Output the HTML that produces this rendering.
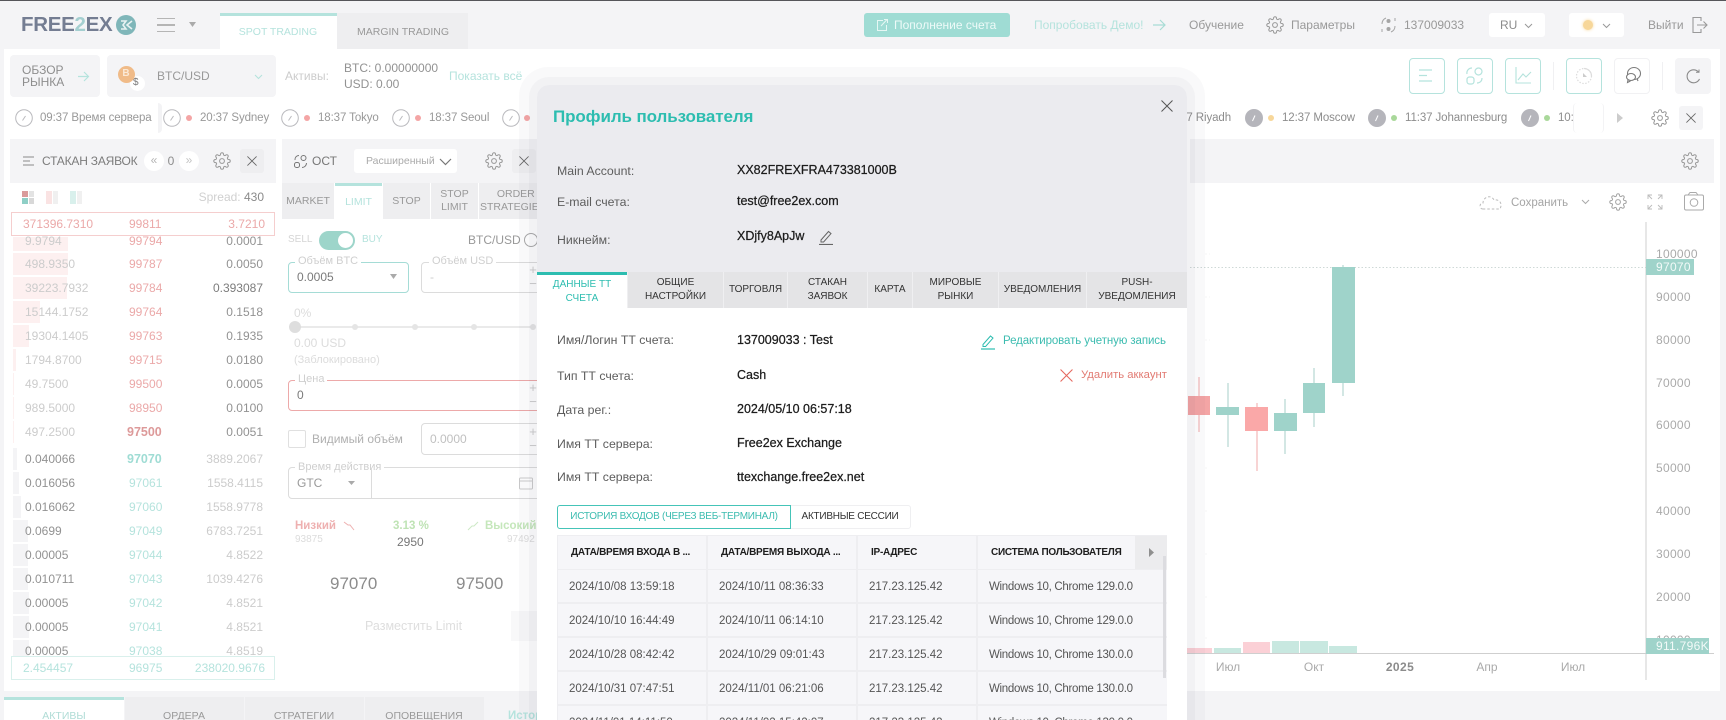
<!DOCTYPE html>
<html lang="ru"><head><meta charset="utf-8"><title>Free2ex</title>
<style>
*{box-sizing:border-box}
html,body{margin:0;padding:0;width:1726px;height:720px;overflow:hidden;background:#f4f4f6;font-family:"Liberation Sans",Arial,sans-serif}
#p{position:relative;width:1726px;height:720px;overflow:hidden;filter:blur(.3px)}
.b{position:absolute}
.t{position:absolute;white-space:nowrap;line-height:16px;transform:translateY(-50%);font-size:12px;color:#999}
.c{transform:translate(-50%,-50%);text-align:center}
.r{transform:translate(-100%,-50%)}
.o{font-size:12px}
.k{font-size:11.5px;letter-spacing:-.1px}
.gy{color:#ccc}.pk{color:#eba9a9}.d{color:#929292}.tl{color:#b5e3dd}.dk{color:#7c7c7c}
.dp{position:absolute;left:13px;height:22px;background:#fdf0f0}
.dg{position:absolute;left:13px;height:22px;background:#f4f4f6}
svg{position:absolute;overflow:visible}
.fs{position:absolute;border:1px solid #dcdcdc;border-radius:4px;background:#fff}
.lg{position:absolute;background:#fff;padding:0 3px;font-size:11px;line-height:12px;color:#cfcfcf;white-space:nowrap}
.tb{position:absolute;background:#eeeef0;font-size:10.5px;color:#999;display:flex;align-items:center;justify-content:center;text-align:center;line-height:13px}
.m{position:absolute;left:537px;top:85px;width:650px;height:660px;background:#fff;border-radius:12px 12px 0 0;box-shadow:0 0 0 8px rgba(70,70,90,.04),0 0 0 18px rgba(70,70,90,.03)}
.mh{position:absolute;left:0;top:0;width:650px;height:187px;background:#ebebef;border-radius:12px 12px 0 0}
.l{position:absolute;left:20px;transform:translateY(-50%);font-size:12.3px;line-height:16px;color:#5d5d5d;white-space:nowrap}
.v{position:absolute;left:200px;transform:translateY(-50%);font-size:12.5px;line-height:16px;color:#1c1c1c;white-space:nowrap;-webkit-text-stroke:.25px #1c1c1c}
.mt{position:absolute;top:187px;height:36px;background:#e4e4e6;font-size:10px;line-height:14px;color:#333;display:flex;align-items:center;justify-content:center;text-align:center;border-left:1px solid #efeff1}
.cell{position:absolute;height:32px;background:#f6f6f9;font-size:11.5px;line-height:34px;color:#555;padding-left:11px;white-space:nowrap;overflow:hidden}
.w{letter-spacing:-.3px}
.hd{font-weight:bold;font-size:10px;letter-spacing:-.25px;color:#1d1d1d;padding-left:13px;height:33px;line-height:33px}
</style></head><body><div id="p">
<svg width="0" height="0" style="position:absolute"><defs>
<symbol id="g" viewBox="0 0 24 24"><path fill="none" stroke="currentColor" stroke-width="1.4" d="M19.4 15a1.65 1.65 0 0 0 .33 1.82l.06.06a2 2 0 0 1 0 2.83 2 2 0 0 1-2.83 0l-.06-.06a1.65 1.65 0 0 0-1.82-.33 1.65 1.65 0 0 0-1 1.51V21a2 2 0 0 1-2 2 2 2 0 0 1-2-2v-.09A1.65 1.65 0 0 0 9 19.4a1.65 1.65 0 0 0-1.82.33l-.06.06a2 2 0 0 1-2.83 0 2 2 0 0 1 0-2.83l.06-.06a1.65 1.65 0 0 0 .33-1.82 1.65 1.65 0 0 0-1.51-1H3a2 2 0 0 1-2-2 2 2 0 0 1 2-2h.09A1.65 1.65 0 0 0 4.6 9a1.65 1.65 0 0 0-.33-1.82l-.06-.06a2 2 0 0 1 0-2.83 2 2 0 0 1 2.83 0l.06.06a1.65 1.65 0 0 0 1.82.33H9a1.65 1.65 0 0 0 1-1.51V3a2 2 0 0 1 2-2 2 2 0 0 1 2 2v.09a1.65 1.65 0 0 0 1 1.51 1.65 1.65 0 0 0 1.82-.33l.06-.06a2 2 0 0 1 2.83 0 2 2 0 0 1 0 2.83l-.06.06a1.65 1.65 0 0 0-.33 1.82V9a1.65 1.65 0 0 0 1.51 1H21a2 2 0 0 1 2 2 2 2 0 0 1-2 2h-.09a1.65 1.65 0 0 0-1.51 1z"/><circle cx="12" cy="12" r="3.2" fill="none" stroke="currentColor" stroke-width="1.4"/></symbol>
<symbol id="x" viewBox="0 0 12 12"><path d="M.5 .5L11.5 11.5M11.5 .5L.5 11.5" stroke="currentColor" stroke-width="1" fill="none"/></symbol>
<symbol id="cl" viewBox="0 0 18 18"><circle cx="9" cy="9" r="8.300" fill="none" stroke="#b9b9bd" stroke-width="1"/><path d="M7.500 11.500L10.500 7" stroke="#b9b9bd" stroke-width="1"/></symbol>
<symbol id="cd" viewBox="0 0 18 18"><circle cx="9" cy="9" r="9" fill="#b5b5bb"/><path d="M7.500 12L10 6.500" stroke="#fff" stroke-width="1" fill="none"/></symbol>
<symbol id="ed" viewBox="0 0 16 16"><path d="M3 11L10.500 2.500 13 4.600 5.600 13H3z" fill="none" stroke="currentColor" stroke-width="1"/><path d="M1 15.500H15" stroke="currentColor" stroke-width="1.200"/></symbol>
</defs></svg>

<!-- top -->
<div class="b" style="left:0;top:0;width:1726px;height:1px;background:#55555a"></div>
<div class="t" style="left:21px;top:25px;font-size:20.500px;font-weight:bold;color:#747d92;letter-spacing:-.3px">FREE<span style="color:#a4cfd0">2</span>EX</div>
<div class="b" style="left:116px;top:15px;width:20px;height:20px;border-radius:50%;background:#7fb6b9"></div>
<svg style="left:116px;top:15px" width="20" height="20"><path d="M5 6H10L7 10 10 14H5M16 6L11 10 16 14" fill="none" stroke="#e8f2f2" stroke-width="1.600"/></svg>
<div class="b" style="left:157px;top:18px;width:18px;height:14px;border-top:1.500px solid #b5b5b5;border-bottom:1.500px solid #b5b5b5"></div>
<div class="b" style="left:157px;top:24px;width:18px;height:1.500px;background:#b5b5b5"></div>
<svg style="left:189px;top:22px" width="8" height="6"><path d="M0 0H7L3.500 5z" fill="#aaa"/></svg>
<div class="b" style="left:220px;top:13px;width:117px;height:37px;background:#fff;border-top:3px solid #b5e3dd"></div>
<div class="t c tl" style="left:278px;top:32px;font-size:10.500px">SPOT TRADING</div>
<div class="b" style="left:337px;top:13px;width:131px;height:36px;background:#eeeef0"></div>
<div class="t c" style="left:403px;top:32px;font-size:10.500px">MARGIN TRADING</div>
<div class="b" style="left:864px;top:13px;width:146px;height:24px;background:#9fdcd4;border-radius:3px"></div>
<svg style="left:876px;top:18px" width="13" height="14"><path d="M7 2.500H1.500V12.500H10.500V7M5 8L11 1.500M8 1.500H11.500V5" fill="none" stroke="#e6f7f4" stroke-width="1"/></svg>
<div class="t" style="left:894px;top:25px;color:#eefaf8;font-size:12px">Пополнение счета</div>
<div class="t tl" style="left:1034px;top:25px;font-size:12px">Попробовать Демо!</div>
<svg style="left:1153px;top:19px" width="13" height="12"><path d="M0 6H12M7 1L12 6 7 11" fill="none" stroke="#a8dcd5" stroke-width="1.200"/></svg>
<div class="t" style="left:1189px;top:25px;font-size:12px">Обучение</div>
<svg style="left:1266px;top:16px;color:#9a9a9a" width="18" height="18"><use href="#g"/></svg>
<div class="t" style="left:1291px;top:25px;font-size:12px">Параметры</div>
<svg style="left:1380px;top:16px" width="17" height="18"><circle cx="8.500" cy="5" r="2" fill="#a5a5a5"/><circle cx="8.500" cy="13" r="2" fill="#a5a5a5"/><path d="M2 8A6.500 6.500 0 0 1 6 2M15 10A6.500 6.500 0 0 1 11 16M2 13V16M15 2V5" fill="none" stroke="#a5a5a5" stroke-width="1"/></svg>
<div class="t" style="left:1404px;top:25px;font-size:12px">137009033</div>
<div class="b" style="left:1489px;top:13px;width:56px;height:24px;background:#fff;border-radius:3px"></div>
<div class="t" style="left:1500px;top:25px;font-size:12px;color:#8c8c8c">RU</div>
<svg style="left:1524px;top:23px" width="9" height="6"><path d="M1 1L4.500 4.500 8 1" fill="none" stroke="#999" stroke-width="1"/></svg>
<div class="b" style="left:1569px;top:13px;width:55px;height:24px;background:#fff;border-radius:3px"></div>
<div class="b" style="left:1583px;top:20px;width:10px;height:10px;border-radius:50%;background:#f7d79a;box-shadow:0 0 3px #f7d79a"></div>
<svg style="left:1602px;top:23px" width="9" height="6"><path d="M1 1L4.500 4.500 8 1" fill="none" stroke="#999" stroke-width="1"/></svg>
<div class="t" style="left:1648px;top:25px;font-size:12px">Выйти</div>
<svg style="left:1691px;top:16px" width="18" height="18"><path d="M10 5V1.500H2V16.500H10V13M6 9H16M12.500 5.500L16 9 12.500 12.500" fill="none" stroke="#9a9a9a" stroke-width="1.100"/></svg>

<!-- main white -->
<div class="b" style="left:4px;top:49px;width:1716px;height:642px;background:#fff"></div>
<div class="b" style="left:10px;top:55px;width:90px;height:42px;background:#f4f4f6;border-radius:4px"></div>
<div class="t" style="left:22px;top:70px;color:#8e8e8e;font-size:12px">ОБЗОР</div>
<div class="t" style="left:22px;top:82px;color:#8e8e8e;font-size:12px">РЫНКА</div>
<svg style="left:78px;top:71px" width="12" height="11"><path d="M0 5.500H10M6 1L10.500 5.500 6 10" fill="none" stroke="#b5e3dd" stroke-width="1.200"/></svg>
<div class="b" style="left:107px;top:55px;width:169px;height:42px;background:#f4f4f6;border-radius:4px"></div>
<div class="b" style="left:130px;top:76px;width:15px;height:15px;border-radius:50%;background:#fff"></div>
<div class="t" style="left:133px;top:83px;font-size:10px;color:#777">$</div>
<div class="b" style="left:118px;top:66px;width:17px;height:17px;border-radius:50%;background:#f0bb88"></div>
<div class="t c" style="left:126px;top:74px;font-size:10px;color:#fbe9d6;font-weight:bold">B</div>
<div class="t" style="left:157px;top:76px;font-size:12px">BTC/USD</div>
<svg style="left:254px;top:74px" width="9" height="6"><path d="M1 1L4.500 4.500 8 1" fill="none" stroke="#b5e3dd" stroke-width="1.100"/></svg>
<div class="t gy" style="left:285px;top:76px">Активы:</div>
<div class="t d" style="left:344px;top:68px">BTC: 0.00000000</div>
<div class="t d" style="left:344px;top:84px">USD: 0.00</div>
<div class="t tl" style="left:449px;top:76px">Показать всё</div>

<!-- clocks -->
<svg style="left:15px;top:109px" width="18" height="18"><use href="#cl"/></svg>
<div class="t k" style="left:40px;top:118px">09:37 Время сервера</div>
<div class="b" style="left:158px;top:103px;width:4px;height:30px;background:#f3f3f5;border-radius:0 4px 4px 0"></div>
<svg style="left:163px;top:109px" width="18" height="18"><use href="#cl"/></svg>
<div class="b" style="left:186px;top:115px;width:6px;height:6px;border-radius:50%;background:#f4a5a5"></div>
<div class="t k" style="left:200px;top:118px">20:37 Sydney</div>
<svg style="left:281px;top:109px" width="18" height="18"><use href="#cl"/></svg>
<div class="b" style="left:304px;top:115px;width:6px;height:6px;border-radius:50%;background:#f4a5a5"></div>
<div class="t k" style="left:318px;top:118px">18:37 Tokyo</div>
<svg style="left:392px;top:109px" width="18" height="18"><use href="#cl"/></svg>
<div class="b" style="left:415px;top:115px;width:6px;height:6px;border-radius:50%;background:#f4a5a5"></div>
<div class="t k" style="left:429px;top:118px">18:37 Seoul</div>
<svg style="left:502px;top:109px" width="18" height="18"><use href="#cl"/></svg>
<div class="b" style="left:524px;top:115px;width:6px;height:6px;border-radius:50%;background:#f4a5a5"></div>

<div class="t k" style="right:495px;top:118px;color:#8d8d8d">37 Riyadh</div>
<svg style="left:1245px;top:109px" width="18" height="18"><use href="#cd"/></svg>
<div class="b" style="left:1268px;top:115px;width:6px;height:6px;border-radius:50%;background:#f7d79a"></div>
<div class="t k" style="left:1282px;top:118px;color:#8d8d8d">12:37 Moscow</div>
<svg style="left:1368px;top:109px" width="18" height="18"><use href="#cd"/></svg>
<div class="b" style="left:1391px;top:115px;width:6px;height:6px;border-radius:50%;background:#a9d89a"></div>
<div class="t k" style="left:1405px;top:118px;color:#8d8d8d">11:37 Johannesburg</div>
<svg style="left:1521px;top:109px" width="18" height="18"><use href="#cd"/></svg>
<div class="b" style="left:1544px;top:115px;width:6px;height:6px;border-radius:50%;background:#a9d89a"></div>
<div class="t k" style="left:1558px;top:118px;color:#8d8d8d;width:15px;overflow:hidden">10:37</div>
<div class="b" style="left:1573px;top:103px;width:31px;height:30px;background:#fff;border-left:1px solid #f3f3f5;border-right:1px solid #f3f3f5;border-radius:4px"></div>
<svg style="left:1617px;top:113px" width="6" height="10"><path d="M0 0L6 5 0 10z" fill="#ccc"/></svg>
<svg style="left:1651px;top:109px;color:#9a9a9a" width="18" height="18"><use href="#g"/></svg>
<div class="b" style="left:1679px;top:106px;width:24px;height:24px;background:#f4f4f6;border-radius:3px"></div>
<svg style="left:1686px;top:113px;color:#666" width="10" height="10"><use href="#x"/></svg>

<!-- toolbar -->
<div class="b" style="left:1409px;top:58px;width:36px;height:36px;border:1px solid #b5e3dd;border-radius:4px"></div>
<svg style="left:1419px;top:69px" width="16" height="14"><path d="M0 1H13M0 6.500H8M0 12H13" stroke="#b5e3dd" stroke-width="1.200"/></svg>
<div class="b" style="left:1457px;top:58px;width:36px;height:36px;border:1px solid #b5e3dd;border-radius:4px"></div>
<svg style="left:1466px;top:67px" width="18" height="18"><circle cx="12.500" cy="4.500" r="3.500" fill="none" stroke="#b5e3dd" stroke-width="1.200"/><rect x="1" y="10" width="7" height="7" rx="2.500" fill="none" stroke="#b5e3dd" stroke-width="1.200"/><path d="M1 7A5 5 0 0 1 6 1M11 16C14 16 16 14 16 11" fill="none" stroke="#b5e3dd" stroke-width="1.200"/></svg>
<div class="b" style="left:1505px;top:58px;width:36px;height:36px;border:1px solid #b5e3dd;border-radius:4px"></div>
<svg style="left:1515px;top:67px" width="17" height="17"><path d="M1 0V16H16M3 13L8 7 11 10 16 5" fill="none" stroke="#b5e3dd" stroke-width="1.100"/></svg>
<div class="b" style="left:1553px;top:62px;width:1px;height:28px;background:#f0f0f2"></div>
<div class="b" style="left:1566px;top:58px;width:36px;height:36px;border:1px solid #b5e3dd;border-radius:4px"></div>
<svg style="left:1575px;top:67px" width="18" height="18"><circle cx="9" cy="9" r="7.500" fill="none" stroke="#ddd" stroke-width="1.200" stroke-dasharray="1.500 1.500"/><path d="M9 1.500A7.500 7.500 0 0 1 16.500 9" fill="none" stroke="#ddd" stroke-width="1.200"/><path d="M8 6V10H12z" fill="#ccc"/></svg>
<div class="b" style="left:1614px;top:58px;width:36px;height:36px;border:1px solid #f1f1f3;border-radius:4px"></div>
<svg style="left:1624px;top:66px" width="18" height="19"><ellipse cx="10" cy="7.500" rx="6.500" ry="6" fill="none" stroke="#7c7c7c" stroke-width="1.100"/><ellipse cx="7" cy="11" rx="4.500" ry="3.500" fill="#fff" stroke="#7c7c7c" stroke-width="1.100"/><path d="M4 14L3.500 16.500 6.500 15M13 12.500L14 15" fill="none" stroke="#7c7c7c" stroke-width="1.100"/></svg>
<div class="b" style="left:1662px;top:62px;width:1px;height:28px;background:#f0f0f2"></div>
<div class="b" style="left:1675px;top:58px;width:36px;height:36px;background:#f4f4f6;border-radius:4px"></div>
<svg style="left:1686px;top:69px" width="15" height="15"><path d="M12.500 3A6.500 6.500 0 1 0 13.500 10" fill="none" stroke="#8a8a8a" stroke-width="1.100"/><path d="M10 3.200H13V0.500" fill="none" stroke="#8a8a8a" stroke-width="1"/></svg>

<!-- order book -->
<div class="b" style="left:10px;top:139px;width:266px;height:44px;background:#f4f4f6"></div>
<svg style="left:23px;top:156px" width="12" height="10"><path d="M0 1H11M0 5H7M0 9H11" stroke="#8a8a8a" stroke-width="1"/></svg>
<div class="t" style="left:42px;top:161px;color:#7c7c7c;font-size:12px;letter-spacing:-.2px">СТАКАН ЗАЯВОК</div>
<div class="b" style="left:144px;top:151px;width:20px;height:20px;border-radius:50%;background:#fff"></div>
<div class="t c" style="left:154px;top:160px;font-size:12px;color:#b5b5b5">«</div>
<div class="t c" style="left:171px;top:161px;color:#8c8c8c">0</div>
<div class="b" style="left:179px;top:151px;width:20px;height:20px;border-radius:50%;background:#fff"></div>
<div class="t c" style="left:189px;top:160px;font-size:12px;color:#c5c5c5">»</div>
<svg style="left:213px;top:152px;color:#9a9a9a" width="18" height="18"><use href="#g"/></svg>
<div class="b" style="left:240px;top:149px;width:24px;height:24px;background:#eeeef0;border-radius:3px"></div>
<svg style="left:247px;top:156px;color:#666" width="10" height="10"><use href="#x"/></svg>
<svg style="left:22px;top:191px" width="62" height="13"><rect x="0" y="0" width="6" height="6" fill="#d99b9b"/><rect x="0" y="7" width="6" height="6" fill="#8fcfc6"/><rect x="7" y="0" width="5" height="6" fill="#e3e3e3"/><rect x="7" y="7" width="5" height="6" fill="#d8d8d8"/><rect x="24" y="0" width="6" height="13" fill="#fae3e3"/><rect x="31" y="0" width="5" height="13" fill="#f0f0f0"/><rect x="48" y="0" width="6" height="13" fill="#d9f0ec"/><rect x="55" y="0" width="5" height="13" fill="#f0f0f0"/></svg>
<div class="t" style="right:1462px;top:197px;color:#d0d0d0;font-size:12px">Spread: <span style="color:#8a8a8a">430</span></div>
<div class="b" style="left:11px;top:212px;width:264px;height:24px;border:1px solid #f5cece"></div>
<div class="t o pk" style="left:23px;top:224px">371396.7310</div><div class="t o pk" style="left:129px;top:224px">99811</div><div class="t o r pk" style="left:265px;top:224px">3.7210</div>

<div class="dp" style="top:237px;width:55px;height:14px"></div><div class="dp" style="top:253px;width:55px"></div><div class="dp" style="top:277px;width:54px"></div><div class="dp" style="top:301px;width:27px"></div><div class="dp" style="top:325px;width:16px"></div><div class="dp" style="top:349px;width:3px"></div><div class="dp" style="top:373px;width:1px"></div><div class="dp" style="top:397px;width:1px"></div><div class="dp" style="top:421px;width:1px"></div>
<div class="t o gy" style="left:25px;top:241px">9.9794</div><div class="t o pk" style="left:129px;top:241px">99794</div><div class="t o r d" style="left:263px;top:241px">0.0001</div>
<div class="t o gy" style="left:25px;top:264px">498.9350</div><div class="t o pk" style="left:129px;top:264px">99787</div><div class="t o r d" style="left:263px;top:264px">0.0050</div>
<div class="t o gy" style="left:25px;top:288px">39223.7932</div><div class="t o pk" style="left:129px;top:288px">99784</div><div class="t o r dk" style="left:263px;top:288px">0.393087</div>
<div class="t o gy" style="left:25px;top:312px">15144.1752</div><div class="t o pk" style="left:129px;top:312px">99764</div><div class="t o r d" style="left:263px;top:312px">0.1518</div>
<div class="t o gy" style="left:25px;top:336px">19304.1405</div><div class="t o pk" style="left:129px;top:336px">99763</div><div class="t o r d" style="left:263px;top:336px">0.1935</div>
<div class="t o gy" style="left:25px;top:360px">1794.8700</div><div class="t o pk" style="left:129px;top:360px">99715</div><div class="t o r d" style="left:263px;top:360px">0.0180</div>
<div class="t o gy" style="left:25px;top:384px">49.7500</div><div class="t o pk" style="left:129px;top:384px">99500</div><div class="t o r d" style="left:263px;top:384px">0.0005</div>
<div class="t o gy" style="left:25px;top:408px">989.5000</div><div class="t o pk" style="left:129px;top:408px">98950</div><div class="t o r d" style="left:263px;top:408px">0.0100</div>
<div class="t o gy" style="left:25px;top:432px">497.2500</div><div class="t o" style="left:127px;top:432px;color:#dd9a9a;font-weight:bold;font-size:12.500px">97500</div><div class="t o r d" style="left:263px;top:432px">0.0051</div>

<div class="dg" style="top:448px;width:4px"></div><div class="dg" style="top:472px;width:6px"></div><div class="dg" style="top:496px;width:8px"></div><div class="dg" style="top:520px;width:15px"></div><div class="dg" style="top:544px;width:15px"></div><div class="dg" style="top:568px;width:15px"></div><div class="dg" style="top:592px;width:16px"></div><div class="dg" style="top:616px;width:16px"></div><div class="dg" style="top:640px;width:16px"></div>
<div class="t o d" style="left:25px;top:459px">0.040066</div><div class="t o" style="left:127px;top:459px;color:#9fdcd4;font-weight:bold;font-size:12.500px">97070</div><div class="t o r gy" style="left:263px;top:459px">3889.2067</div>
<div class="t o d" style="left:25px;top:483px">0.016056</div><div class="t o tl" style="left:129px;top:483px">97061</div><div class="t o r gy" style="left:263px;top:483px">1558.4115</div>
<div class="t o d" style="left:25px;top:507px">0.016062</div><div class="t o tl" style="left:129px;top:507px">97060</div><div class="t o r gy" style="left:263px;top:507px">1558.9778</div>
<div class="t o d" style="left:25px;top:531px">0.0699</div><div class="t o tl" style="left:129px;top:531px">97049</div><div class="t o r gy" style="left:263px;top:531px">6783.7251</div>
<div class="t o d" style="left:25px;top:555px">0.00005</div><div class="t o tl" style="left:129px;top:555px">97044</div><div class="t o r gy" style="left:263px;top:555px">4.8522</div>
<div class="t o d" style="left:25px;top:579px">0.010711</div><div class="t o tl" style="left:129px;top:579px">97043</div><div class="t o r gy" style="left:263px;top:579px">1039.4276</div>
<div class="t o d" style="left:25px;top:603px">0.00005</div><div class="t o tl" style="left:129px;top:603px">97042</div><div class="t o r gy" style="left:263px;top:603px">4.8521</div>
<div class="t o d" style="left:25px;top:627px">0.00005</div><div class="t o tl" style="left:129px;top:627px">97041</div><div class="t o r gy" style="left:263px;top:627px">4.8521</div>
<div class="t o d" style="left:25px;top:651px">0.00005</div><div class="t o tl" style="left:129px;top:651px">97038</div><div class="t o r gy" style="left:263px;top:651px">4.8519</div>
<div class="b" style="left:11px;top:656px;width:264px;height:24px;border:1px solid #d9f0ec;background:#fff"></div>
<div class="t o tl" style="left:23px;top:668px">2.454457</div><div class="t o tl" style="left:129px;top:668px">96975</div><div class="t o r tl" style="left:265px;top:668px">238020.9676</div>

<!-- OST -->
<div class="b" style="left:282px;top:139px;width:260px;height:44px;background:#f4f4f6"></div>
<svg style="left:294px;top:155px" width="13" height="13"><circle cx="9.500" cy="3" r="2.500" fill="none" stroke="#777"/><rect x="0.500" y="7.500" width="5" height="5" rx="2" fill="none" stroke="#777"/><path d="M1 5A4 4 0 0 1 5 .5M8 12.500C10.500 12.500 12.500 10.500 12.500 8" fill="none" stroke="#777"/></svg>
<div class="t" style="left:312px;top:161px;color:#777;font-size:12px">ОСТ</div>
<div class="b" style="left:354px;top:149px;width:103px;height:24px;background:#fff;border-radius:3px"></div>
<div class="t" style="left:366px;top:161px;font-size:10.500px;color:#aaa">Расширенный</div>
<svg style="left:439px;top:158px" width="13" height="8"><path d="M1 1L6.500 6.500 12 1" fill="none" stroke="#777" stroke-width="1.200"/></svg>
<svg style="left:485px;top:152px;color:#9a9a9a" width="18" height="18"><use href="#g"/></svg>
<div class="b" style="left:512px;top:149px;width:24px;height:24px;background:#eeeef0;border-radius:3px"></div>
<svg style="left:519px;top:156px;color:#666" width="10" height="10"><use href="#x"/></svg>
<div class="tb" style="left:282px;top:183px;width:52px;height:36px">MARKET</div>
<div class="tb" style="left:335px;top:183px;width:47px;height:36px;background:#fff;border-top:3px solid #b5e3dd;color:#b5e3dd">LIMIT</div>
<div class="tb" style="left:383px;top:183px;width:47px;height:36px">STOP</div>
<div class="tb" style="left:431px;top:183px;width:47px;height:36px">STOP<br>LIMIT</div>
<div class="tb" style="left:479px;top:183px;width:58px;height:36px;justify-content:flex-start;padding-left:1px;white-space:nowrap">&nbsp;&nbsp;ORDER<br>STRATEGIES</div>
<div class="t" style="left:288px;top:240px;font-size:10px;color:#d5d5d5">SELL</div>
<div class="b" style="left:319px;top:231px;width:36px;height:19px;border-radius:10px;background:#9dd5ca"></div>
<div class="b" style="left:338px;top:233px;width:15px;height:15px;border-radius:50%;background:#fff"></div>
<div class="t tl" style="left:362px;top:240px;font-size:10px">BUY</div>
<div class="t" style="left:468px;top:240px;font-size:12px">BTC/USD</div>
<div class="b" style="left:524px;top:233px;width:14px;height:14px;border-radius:50%;border:1px solid #aaa"></div>
<div class="fs" style="left:288px;top:262px;width:121px;height:31px;border-color:#a5dcd6"></div>
<div class="lg" style="left:295px;top:255px">Объём BTC</div>
<div class="t" style="left:297px;top:277px;color:#7a7a7a">0.0005</div>
<svg style="left:390px;top:274px" width="8" height="6"><path d="M0 0H7L3.500 5z" fill="#aaa"/></svg>
<div class="fs" style="left:421px;top:262px;width:130px;height:31px"></div>
<div class="lg" style="left:429px;top:255px">Объём USD</div>
<div class="t gy" style="left:430px;top:277px">-</div>
<div class="t c" style="left:533px;top:270px;color:#ccc;font-size:13px">+</div>
<div class="t c" style="left:533px;top:284px;color:#ccc;font-size:13px">−</div>
<div class="t" style="left:294px;top:313px;color:#dcdcdc">0%</div>
<div class="b" style="left:295px;top:326px;width:240px;height:2px;background:#eaeaea"></div>
<div class="b" style="left:289px;top:321px;width:12px;height:12px;border-radius:50%;background:#dedede"></div>
<div class="b" style="left:352px;top:324px;width:6px;height:6px;border-radius:50%;background:#e5e5e5"></div>
<div class="b" style="left:412px;top:324px;width:6px;height:6px;border-radius:50%;background:#e5e5e5"></div>
<div class="b" style="left:471px;top:324px;width:6px;height:6px;border-radius:50%;background:#e5e5e5"></div>
<div class="b" style="left:530px;top:324px;width:6px;height:6px;border-radius:50%;background:#e5e5e5"></div>
<div class="t" style="left:294px;top:343px;color:#dcdcdc">0.00 USD</div>
<div class="t" style="left:294px;top:360px;color:#dcdcdc;font-size:11px">(Заблокировано)</div>
<div class="fs" style="left:288px;top:380px;width:263px;height:31px;border-color:#eda9a9"></div>
<div class="lg" style="left:295px;top:373px">Цена</div>
<div class="t" style="left:297px;top:395px;color:#7a7a7a">0</div>
<div class="t c" style="left:533px;top:388px;color:#ccc;font-size:13px">+</div>
<div class="t c" style="left:533px;top:402px;color:#ccc;font-size:13px">−</div>
<div class="b" style="left:288px;top:430px;width:18px;height:18px;border:1px solid #e0e0e0;border-radius:2px"></div>
<div class="t" style="left:312px;top:439px;color:#b0b0b0;font-size:12px">Видимый объём</div>
<div class="fs" style="left:421px;top:423px;width:130px;height:32px"></div>
<div class="t" style="left:430px;top:439px;color:#c0c0c0">0.0000</div>
<div class="t c" style="left:533px;top:432px;color:#ccc;font-size:13px">+</div>
<div class="t c" style="left:533px;top:446px;color:#ccc;font-size:13px">−</div>
<div class="fs" style="left:288px;top:467px;width:263px;height:32px"></div>
<div class="lg" style="left:295px;top:461px">Время действия</div>
<div class="b" style="left:371px;top:468px;width:1px;height:30px;background:#dcdcdc"></div>
<div class="t" style="left:297px;top:483px;color:#9a9a9a">GTC</div>
<svg style="left:348px;top:481px" width="8" height="5"><path d="M0 0H7L3.500 4z" fill="#aaa"/></svg>
<svg style="left:519px;top:476px" width="14" height="14"><rect x=".5" y="2" width="13" height="11" rx="1" fill="none" stroke="#ccc"/><path d="M.5 5H13.500" stroke="#ccc"/></svg>
<div class="t" style="left:295px;top:526px;color:#eeb0b0;font-weight:bold;font-size:11.500px">Низкий</div>
<svg style="left:344px;top:522px" width="11" height="9"><path d="M0 0L4 3 6 3 10 8" fill="none" stroke="#eeb0b0"/></svg>
<div class="t" style="left:295px;top:540px;color:#dcdcdc;font-size:10px">93875</div>
<div class="t" style="left:393px;top:526px;color:#bfe3b5;font-weight:bold;font-size:11.500px">3.13 %</div>
<div class="t" style="left:397px;top:542px;color:#777;font-size:12px">2950</div>
<svg style="left:468px;top:522px" width="11" height="9"><path d="M0 8L4 4 6 4 10 0" fill="none" stroke="#cde9c5"/></svg>
<div class="t" style="left:485px;top:526px;color:#c5e7bb;font-weight:bold;font-size:11.500px">Высокий</div>
<div class="t" style="left:507px;top:540px;color:#dcdcdc;font-size:10px">97492</div>
<div class="t" style="left:330px;top:584px;color:#8c8c8c;font-size:17px">97070</div>
<div class="t" style="left:456px;top:584px;color:#8c8c8c;font-size:17px">97500</div>
<div class="t" style="left:365px;top:626px;color:#dedede;font-size:12.500px">Разместить Limit</div>
<div class="b" style="left:511px;top:611px;width:26px;height:30px;background:#f8f8f9"></div>

<!-- bottom tabs -->
<div class="b" style="left:4px;top:697px;width:120px;height:23px;background:#fff;border-top:3px solid #b5e3dd"></div>
<div class="t c" style="left:64px;top:716px;font-size:10.500px;color:#b0dcd6">АКТИВЫ</div>
<div class="b" style="left:125px;top:697px;width:119px;height:23px;background:#eeeef0"></div>
<div class="t c" style="left:184px;top:716px;font-size:10.500px">ОРДЕРА</div>
<div class="b" style="left:245px;top:697px;width:119px;height:23px;background:#eeeef0"></div>
<div class="t c" style="left:304px;top:716px;font-size:10.500px">СТРАТЕГИИ</div>
<div class="b" style="left:365px;top:697px;width:119px;height:23px;background:#eeeef0"></div>
<div class="t c" style="left:424px;top:716px;font-size:10.500px">ОПОВЕЩЕНИЯ</div>
<div class="t tl" style="left:508px;top:716px;font-size:11.500px;font-weight:bold">История</div>

<!-- chart -->
<div class="b" style="left:1190px;top:139px;width:524px;height:44px;background:#f4f4f6"></div>
<svg style="left:1681px;top:152px;color:#9a9a9a" width="18" height="18"><use href="#g"/></svg>
<svg style="left:1479px;top:194px" width="24" height="16"><path d="M4 15C0 15 0 9 4 9 4 3 12 0 15 6 20 5 24 9 21 15z" fill="none" stroke="#bbb" stroke-dasharray="2.500 2"/></svg>
<div class="t" style="left:1511px;top:203px;font-size:11.500px;color:#a5a5a5">Сохранить</div>
<svg style="left:1581px;top:199px" width="9" height="6"><path d="M1 1L4.500 4.500 8 1" fill="none" stroke="#aaa"/></svg>
<svg style="left:1609px;top:192px;color:#a5a5a5" width="18" height="20"><use href="#g"/></svg>
<svg style="left:1647px;top:194px" width="16" height="16"><path d="M1 5V1H5M1 1L5 5M15 5V1H11M15 1L11 5M1 11V15H5M1 15L5 11M15 11V15H11M15 15L11 11" fill="none" stroke="#bbb" stroke-width=".9"/></svg>
<svg style="left:1684px;top:192px" width="20" height="19"><rect x=".5" y="3" width="19" height="15" rx="1.500" fill="none" stroke="#aaa"/><circle cx="10" cy="10.500" r="3.800" fill="none" stroke="#aaa"/><path d="M4 3L6 .5H12L14 3" fill="none" stroke="#aaa"/></svg>

<svg style="left:0;top:0" width="1726" height="720">
<path d="M1205 254H1210M1205 297H1210M1205 340H1210M1205 468H1208M1205 511H1208M1205 554H1208M1205 597H1208M1205 638H1208" stroke="#f4f4f4" stroke-width="1" stroke-dasharray="2 2"/>
<path d="M1190 267.500H1646" stroke="#cfd9d7" stroke-width="1" stroke-dasharray="1.500 2"/>
<path d="M1646 222V680" stroke="#cfcfcf" stroke-width="1"/>
<path d="M1187 653.500H1714" stroke="#cfcfcf" stroke-width="1"/>
<path d="M1199 377V432M1257 403V471" stroke="#f2a9a9" stroke-width="1"/>
<path d="M1228 383V447M1285 399V454M1314 368V427M1343 265V396" stroke="#a7cfc9" stroke-width="1"/>
<rect x="1188" y="396" width="22" height="19" fill="#f4a5a5"/>
<rect x="1216" y="407" width="23" height="8" fill="#9fd3ca"/>
<rect x="1245" y="407" width="23" height="24" fill="#faa8a8"/>
<rect x="1274" y="413" width="23" height="18" fill="#9fd3ca"/>
<rect x="1303" y="383" width="22" height="30" fill="#9fd3ca"/>
<rect x="1332" y="267" width="23" height="116" fill="#9fd3ca"/>
<rect x="1187" y="648" width="25" height="5" fill="#fbd0d6"/>
<rect x="1214" y="648" width="27" height="5" fill="#c8e8e0"/>
<rect x="1243" y="642" width="27" height="11" fill="#fbd0d6"/>
<rect x="1272" y="641" width="27" height="12" fill="#c8e8e0"/>
<rect x="1300" y="641" width="28" height="12" fill="#c8e8e0"/>
<rect x="1329" y="646" width="28" height="7" fill="#c8e8e0"/>
</svg>
<div class="t" style="left:1656px;top:254px;font-size:12px;color:#aaa;letter-spacing:.3px">100000</div>
<div class="t" style="left:1656px;top:297px;font-size:12px;color:#aaa;letter-spacing:.3px">90000</div>
<div class="t" style="left:1656px;top:340px;font-size:12px;color:#aaa;letter-spacing:.3px">80000</div>
<div class="t" style="left:1656px;top:383px;font-size:12px;color:#aaa;letter-spacing:.3px">70000</div>
<div class="t" style="left:1656px;top:425px;font-size:12px;color:#aaa;letter-spacing:.3px">60000</div>
<div class="t" style="left:1656px;top:468px;font-size:12px;color:#aaa;letter-spacing:.3px">50000</div>
<div class="t" style="left:1656px;top:511px;font-size:12px;color:#aaa;letter-spacing:.3px">40000</div>
<div class="t" style="left:1656px;top:554px;font-size:12px;color:#aaa;letter-spacing:.3px">30000</div>
<div class="t" style="left:1656px;top:597px;font-size:12px;color:#aaa;letter-spacing:.3px">20000</div>
<div class="t" style="left:1656px;top:640px;font-size:12px;color:#aaa;letter-spacing:.3px">10000</div>
<div class="b" style="left:1646px;top:259px;width:48px;height:16px;background:#9fd3ca"></div>
<div class="t" style="left:1656px;top:267px;font-size:12px;color:#f2faf8;letter-spacing:.3px">97070</div>
<div class="b" style="left:1646px;top:638px;width:63px;height:16px;background:#9fd3ca"></div>
<div class="t" style="left:1656px;top:646px;font-size:12px;color:#f2faf8;letter-spacing:.3px">911.796K</div>
<div class="t c" style="left:1228px;top:667px;color:#aaa">Июл</div>
<div class="t c" style="left:1314px;top:667px;color:#aaa">Окт</div>
<div class="t c" style="left:1400px;top:667px;color:#8c8c8c;font-weight:bold;letter-spacing:.4px">2025</div>
<div class="t c" style="left:1487px;top:667px;color:#aaa">Апр</div>
<div class="t c" style="left:1573px;top:667px;color:#aaa">Июл</div>

<!-- modal -->
<div class="m">
<div class="mh"></div>
<div class="t" style="left:16px;top:32px;font-size:17px;font-weight:bold;color:#2dbdb0;letter-spacing:-.1px">Профиль пользователя</div>
<svg style="left:624px;top:15px;color:#555" width="12" height="12"><use href="#x"/></svg>
<div class="l" style="top:86px">Main Account:</div><div class="v" style="top:85px">XX82FREXFRA473381000B</div>
<div class="l" style="top:117px">E-mail счета:</div><div class="v" style="top:116px">test@free2ex.com</div>
<div class="l" style="top:155px">Никнейм:</div><div class="v" style="top:151px">XDjfy8ApJw</div>
<svg style="left:281px;top:144px;color:#666" width="16" height="16"><use href="#ed"/></svg>
<div class="mt" style="left:0;width:90px;background:#fff;border-top:3px solid #2dbdb0;border-left:0;color:#2dbdb0">ДАННЫЕ ТТ<br>СЧЕТА</div>
<div class="mt" style="left:90px;width:96px">ОБЩИЕ<br>НАСТРОЙКИ</div>
<div class="mt" style="left:186px;width:64px">ТОРГОВЛЯ</div>
<div class="mt" style="left:250px;width:80px">СТАКАН<br>ЗАЯВОК</div>
<div class="mt" style="left:330px;width:45px">КАРТА</div>
<div class="mt" style="left:375px;width:86px">МИРОВЫЕ<br>РЫНКИ</div>
<div class="mt" style="left:461px;width:88px">УВЕДОМЛЕНИЯ</div>
<div class="mt" style="left:549px;width:101px">PUSH-<br>УВЕДОМЛЕНИЯ</div>

<div class="l" style="top:255px">Имя/Логин ТТ счета:</div><div class="v" style="top:255px">137009033 : Test</div>
<svg style="left:443px;top:248px;color:#2dbdb0" width="16" height="17"><use href="#ed"/></svg>
<div class="t" style="left:466px;top:256px;font-size:11.500px;color:#3cbcb0;letter-spacing:-.1px">Редактировать учетную запись</div>
<div class="l" style="top:291px">Тип ТТ счета:</div><div class="v" style="top:290px">Cash</div>
<svg style="left:523px;top:284px;color:#e5695f" width="13" height="13"><use href="#x"/></svg>
<div class="t" style="left:544px;top:290px;font-size:11.300px;color:#e27b73">Удалить аккаунт</div>
<div class="l" style="top:325px">Дата рег.:</div><div class="v" style="top:324px">2024/05/10 06:57:18</div>
<div class="l" style="top:359px">Имя ТТ сервера:</div><div class="v" style="top:358px">Free2ex Exchange</div>
<div class="l" style="top:392px">Имя ТТ сервера:</div><div class="v" style="top:392px">ttexchange.free2ex.net</div>

<div class="b" style="left:253px;top:420px;width:121px;height:24px;border:1px solid #efeff1;border-radius:0 3px 3px 0;background:#fff"></div>
<div class="t c" style="left:313px;top:432px;font-size:10px;letter-spacing:-.25px;color:#333">АКТИВНЫЕ СЕССИИ</div>
<div class="b" style="left:20px;top:420px;width:234px;height:24px;border:1px solid #45c4b8;border-radius:3px 0 0 3px;background:#fff"></div>
<div class="t c" style="left:137px;top:432px;font-size:10px;letter-spacing:-.25px;color:#3cbcb0">ИСТОРИЯ ВХОДОВ (ЧЕРЕЗ ВЕБ-ТЕРМИНАЛ)</div>

<div class="b" style="left:20px;top:450px;width:610px;height:210px;background:#eeeef1"></div>
<div class="cell hd" style="left:21px;top:451px;width:148px">ДАТА/ВРЕМЯ ВХОДА В ...</div>
<div class="cell hd" style="left:171px;top:451px;width:148px">ДАТА/ВРЕМЯ ВЫХОДА ...</div>
<div class="cell hd" style="left:321px;top:451px;width:118px">IP-АДРЕС</div>
<div class="cell hd" style="left:441px;top:451px;width:189px">СИСТЕМА ПОЛЬЗОВАТЕЛЯ</div>
<div class="b" style="left:598px;top:451px;width:32px;height:33px;background:#ececee"></div>
<svg style="left:612px;top:463px" width="6" height="9"><path d="M0 0L5 4.500 0 9z" fill="#8f8f8f"/></svg>

<div class="cell" style="left:21px;top:485px;width:148px">2024/10/08 13:59:18</div><div class="cell" style="left:171px;top:485px;width:148px">2024/10/11 08:36:33</div><div class="cell" style="left:321px;top:485px;width:118px">217.23.125.42</div><div class="cell w" style="left:441px;top:485px;width:189px">Windows 10, Chrome 129.0.0</div>
<div class="cell" style="left:21px;top:519px;width:148px">2024/10/10 16:44:49</div><div class="cell" style="left:171px;top:519px;width:148px">2024/10/11 06:14:10</div><div class="cell" style="left:321px;top:519px;width:118px">217.23.125.42</div><div class="cell w" style="left:441px;top:519px;width:189px">Windows 10, Chrome 129.0.0</div>
<div class="cell" style="left:21px;top:553px;width:148px">2024/10/28 08:42:42</div><div class="cell" style="left:171px;top:553px;width:148px">2024/10/29 09:01:43</div><div class="cell" style="left:321px;top:553px;width:118px">217.23.125.42</div><div class="cell w" style="left:441px;top:553px;width:189px">Windows 10, Chrome 130.0.0</div>
<div class="cell" style="left:21px;top:587px;width:148px">2024/10/31 07:47:51</div><div class="cell" style="left:171px;top:587px;width:148px">2024/11/01 06:21:06</div><div class="cell" style="left:321px;top:587px;width:118px">217.23.125.42</div><div class="cell w" style="left:441px;top:587px;width:189px">Windows 10, Chrome 130.0.0</div>
<div class="cell" style="left:21px;top:621px;width:148px">2024/11/01 14:11:50</div><div class="cell" style="left:171px;top:621px;width:148px">2024/11/02 15:42:07</div><div class="cell" style="left:321px;top:621px;width:118px">217.23.125.42</div><div class="cell w" style="left:441px;top:621px;width:189px">Windows 10, Chrome 130.0.0</div>
<div class="b" style="left:626px;top:471px;width:3px;height:122px;background:#dcdce0"></div>
</div>
</div></body></html>
